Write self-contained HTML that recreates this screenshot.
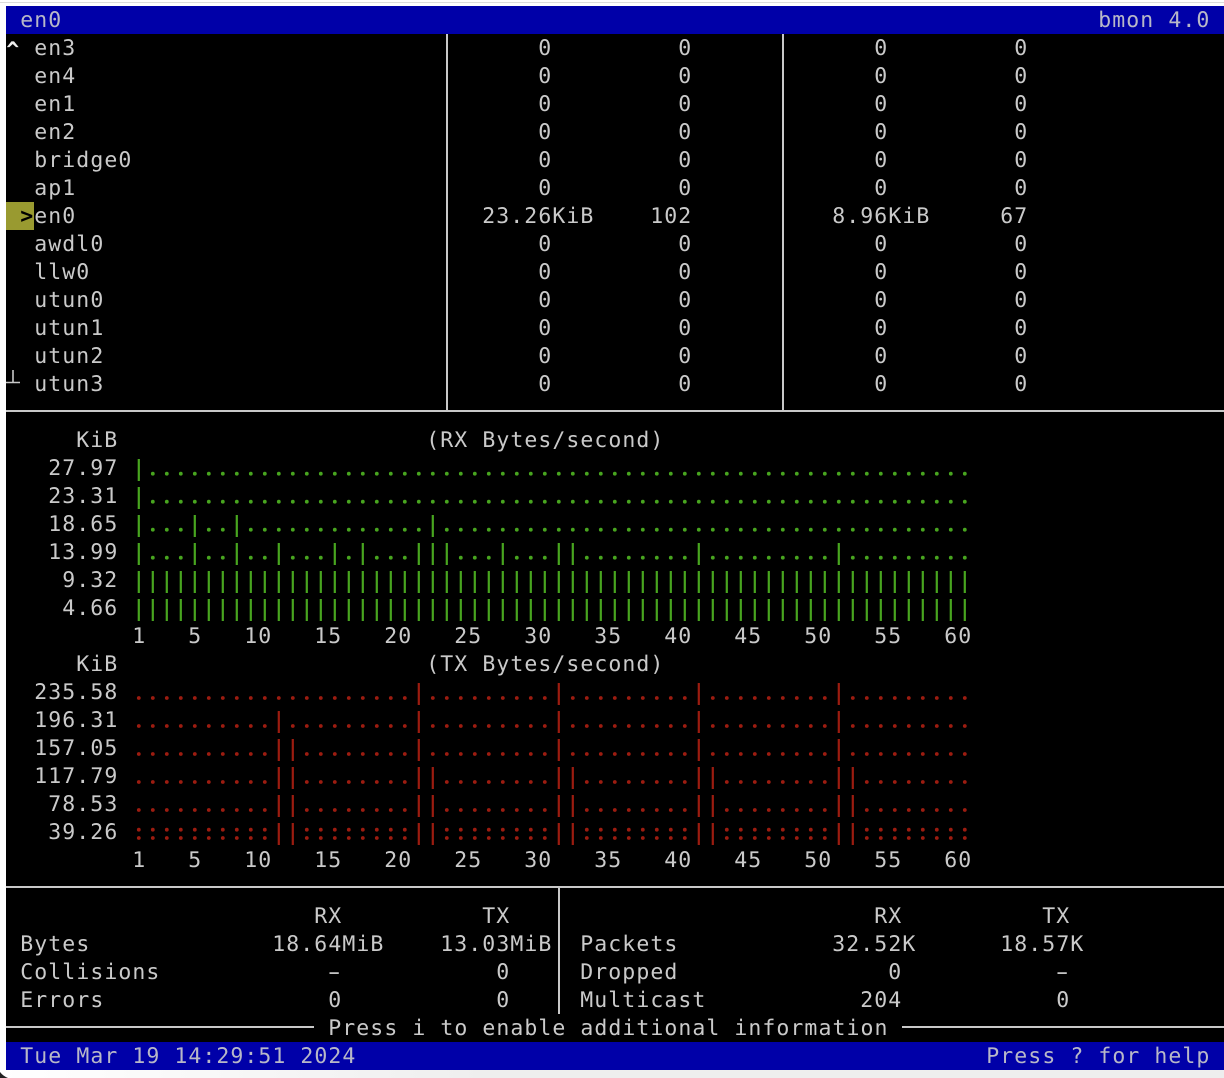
<!DOCTYPE html>
<html><head><meta charset="utf-8"><title>bmon</title>
<style>
html,body{margin:0;padding:0;background:#fff;width:1224px;height:1078px;overflow:hidden}
#bg,#s,svg.o{position:absolute;left:0;top:0}
.k{position:absolute;left:6px;top:6px;width:1218px;height:1064px;background:#000}
.bar{position:absolute;left:6px;width:1218px;height:28px;background:#0000a8}
.hl{position:absolute;left:6px;top:202px;width:28px;height:28px;background:#999a30}
#s{left:6.3px;top:7px;font:21.5px/28px "DejaVu Sans Mono","Liberation Mono",monospace;letter-spacing:1.06px;color:#cacaca;text-rendering:geometricPrecision}
#s div{position:absolute;left:0;height:28px;width:1200px}
#s i{position:absolute;top:0;font-style:normal;white-space:pre}
#s i.m{transform:scaleX(1.7)}
#s div.h{color:#b8b8c8}
.a{left:532px}.b{left:672px}.c{left:868px}.d{left:1008px}.n{left:28px}
</style></head><body>
<div id="bg">
<div style="position:absolute;left:0;top:2px;width:1224px;height:1px;background:#dcdcdc"></div>
<div style="position:absolute;left:0;top:1070px;width:1224px;height:8px;background:linear-gradient(90deg,#fff,#eee 40%)"></div>
<div class="k"></div>
<div class="bar" style="top:6px"></div>
<div class="bar" style="top:1042px"></div>
<div class="hl"></div>
</div>
<svg class="o" width="1224" height="1078" viewBox="0 0 1224 1078" fill="none">
<path d="M0 1072Q3 1076 8 1078H0Z" fill="#222"/>
<g stroke="#c8c8c8" stroke-width="2">
<path d="M447 34V411M783 34V411M6 411H1224M6 887H1224M559 887V1014M6 1027H314M902 1027H1224"/>
<path d="M6 382.5H20M13 370V382.5" stroke-width="1.6"/>
</g>
<g stroke="#48a51f" transform="translate(-.2 0)">
<path stroke-width="3.8" stroke-linecap="round" stroke-dasharray="0 14" d="M153 473.7H966M153 501.7H966M153 529.7H182M209 529.7H224M251 529.7H420M447 529.7H966M153 557.7H182M209 557.7H224M251 557.7H266M293 557.7H322M349 557.7H350M377 557.7H406M461 557.7H490M517 557.7H546M587 557.7H686M713 557.7H826M853 557.7H966"/>
<path stroke-width="2.2" d="M139 459v22M139 487v22M139 515v22M195 515v22M237 515v22M433 515v22M139 543v22M195 543v22M237 543v22M279 543v22M335 543v22M363 543v22M419 543v22M433 543v22M447 543v22M503 543v22M559 543v22M573 543v22M699 543v22M839 543v22"/>
<path stroke-width="22" stroke-dasharray="2.2 11.8" d="M137.9 582H967M137.9 610H967"/>
</g>
<g stroke="#9c1c10" transform="translate(-.2 0)">
<path stroke-width="3.8" stroke-linecap="round" stroke-dasharray="0 14" d="M139 698H406M433 698H546M573 698H686M713 698H826M853 698H966M139 726H266M293 726H406M433 726H546M573 726H686M713 726H826M853 726H966M139 754H266M307 754H406M433 754H546M573 754H686M713 754H826M853 754H966M139 782H266M307 782H406M447 782H546M587 782H686M727 782H826M867 782H966M139 810H266M307 810H406M447 810H546M587 810H686M727 810H826M867 810H966M139 838H266M307 838H406M447 838H546M587 838H686M727 838H826M867 838H966M139 829.7H266M307 829.7H406M447 829.7H546M587 829.7H686M727 829.7H826M867 829.7H966"/>
<path stroke-width="2.2" d="M419 683v22M559 683v22M699 683v22M839 683v22M279 711v22M419 711v22M559 711v22M699 711v22M839 711v22M279 739v22M293 739v22M419 739v22M559 739v22M699 739v22M839 739v22M279 767v22M293 767v22M419 767v22M433 767v22M559 767v22M573 767v22M699 767v22M713 767v22M839 767v22M853 767v22M279 795v22M293 795v22M419 795v22M433 795v22M559 795v22M573 795v22M699 795v22M713 795v22M839 795v22M853 795v22M279 823v22M293 823v22M419 823v22M433 823v22M559 823v22M573 823v22M699 823v22M713 823v22M839 823v22M853 823v22"/>
</g>
</svg>
<div id="s">
<div class="h" style="top:0"><i style="left:14px">en0</i><i style="left:1092px">bmon 4.0</i></div>
<div style="top:28px"><i style="left:0;top:2px;font-weight:bold;color:#eee">^</i><i class="n">en3</i><i class="a">0</i><i class="b">0</i><i class="c">0</i><i class="d">0</i></div>
<div style="top:56px"><i class="n">en4</i><i class="a">0</i><i class="b">0</i><i class="c">0</i><i class="d">0</i></div>
<div style="top:84px"><i class="n">en1</i><i class="a">0</i><i class="b">0</i><i class="c">0</i><i class="d">0</i></div>
<div style="top:112px"><i class="n">en2</i><i class="a">0</i><i class="b">0</i><i class="c">0</i><i class="d">0</i></div>
<div style="top:140px"><i class="n">bridge0</i><i class="a">0</i><i class="b">0</i><i class="c">0</i><i class="d">0</i></div>
<div style="top:168px"><i class="n">ap1</i><i class="a">0</i><i class="b">0</i><i class="c">0</i><i class="d">0</i></div>
<div style="top:196px"><i style="left:14px;color:#000;font-weight:bold">&gt;</i><i class="n">en0</i><i style="left:476px">23.26KiB</i><i style="left:644px">102</i><i style="left:826px">8.96KiB</i><i style="left:994px">67</i></div>
<div style="top:224px"><i class="n">awdl0</i><i class="a">0</i><i class="b">0</i><i class="c">0</i><i class="d">0</i></div>
<div style="top:252px"><i class="n">llw0</i><i class="a">0</i><i class="b">0</i><i class="c">0</i><i class="d">0</i></div>
<div style="top:280px"><i class="n">utun0</i><i class="a">0</i><i class="b">0</i><i class="c">0</i><i class="d">0</i></div>
<div style="top:308px"><i class="n">utun1</i><i class="a">0</i><i class="b">0</i><i class="c">0</i><i class="d">0</i></div>
<div style="top:336px"><i class="n">utun2</i><i class="a">0</i><i class="b">0</i><i class="c">0</i><i class="d">0</i></div>
<div style="top:364px"><i class="n">utun3</i><i class="a">0</i><i class="b">0</i><i class="c">0</i><i class="d">0</i></div>

<div style="top:420px"><i style="left:70px">KiB</i><i style="left:420px">(RX Bytes/second)</i></div>
<div style="top:448px"><i style="left:42px">27.97</i></div>
<div style="top:476px"><i style="left:42px">23.31</i></div>
<div style="top:504px"><i style="left:42px">18.65</i></div>
<div style="top:532px"><i style="left:42px">13.99</i></div>
<div style="top:560px"><i style="left:56px">9.32</i></div>
<div style="top:588px"><i style="left:56px">4.66</i></div>
<div style="top:616px"><i style="left:126px">1</i><i style="left:182px">5</i><i style="left:238px">10</i><i style="left:308px">15</i><i style="left:378px">20</i><i style="left:448px">25</i><i style="left:518px">30</i><i style="left:588px">35</i><i style="left:658px">40</i><i style="left:728px">45</i><i style="left:798px">50</i><i style="left:868px">55</i><i style="left:938px">60</i></div>
<div style="top:644px"><i style="left:70px">KiB</i><i style="left:420px">(TX Bytes/second)</i></div>
<div style="top:672px"><i style="left:28px">235.58</i></div>
<div style="top:700px"><i style="left:28px">196.31</i></div>
<div style="top:728px"><i style="left:28px">157.05</i></div>
<div style="top:756px"><i style="left:28px">117.79</i></div>
<div style="top:784px"><i style="left:42px">78.53</i></div>
<div style="top:812px"><i style="left:42px">39.26</i></div>
<div style="top:840px"><i style="left:126px">1</i><i style="left:182px">5</i><i style="left:238px">10</i><i style="left:308px">15</i><i style="left:378px">20</i><i style="left:448px">25</i><i style="left:518px">30</i><i style="left:588px">35</i><i style="left:658px">40</i><i style="left:728px">45</i><i style="left:798px">50</i><i style="left:868px">55</i><i style="left:938px">60</i></div>

<div style="top:896px"><i style="left:308px">RX</i><i style="left:476px">TX</i><i style="left:868px">RX</i><i style="left:1036px">TX</i></div>
<div style="top:924px"><i style="left:14px">Bytes</i><i style="left:266px">18.64MiB</i><i style="left:434px">13.03MiB</i><i style="left:574px">Packets</i><i style="left:826px">32.52K</i><i style="left:994px">18.57K</i></div>
<div style="top:952px"><i style="left:14px">Collisions</i><i class="m" style="left:322px">-</i><i style="left:490px">0</i><i style="left:574px">Dropped</i><i style="left:882px">0</i><i class="m" style="left:1050px">-</i></div>
<div style="top:980px"><i style="left:14px">Errors</i><i style="left:322px">0</i><i style="left:490px">0</i><i style="left:574px">Multicast</i><i style="left:854px">204</i><i style="left:1050px">0</i></div>
<div style="top:1008px"><i style="left:322px">Press i to enable additional information</i></div>
<div class="h" style="top:1036px"><i style="left:14px">Tue Mar 19 14:29:51 2024</i><i style="left:980px">Press ? for help</i></div>
</div>
</body></html>
